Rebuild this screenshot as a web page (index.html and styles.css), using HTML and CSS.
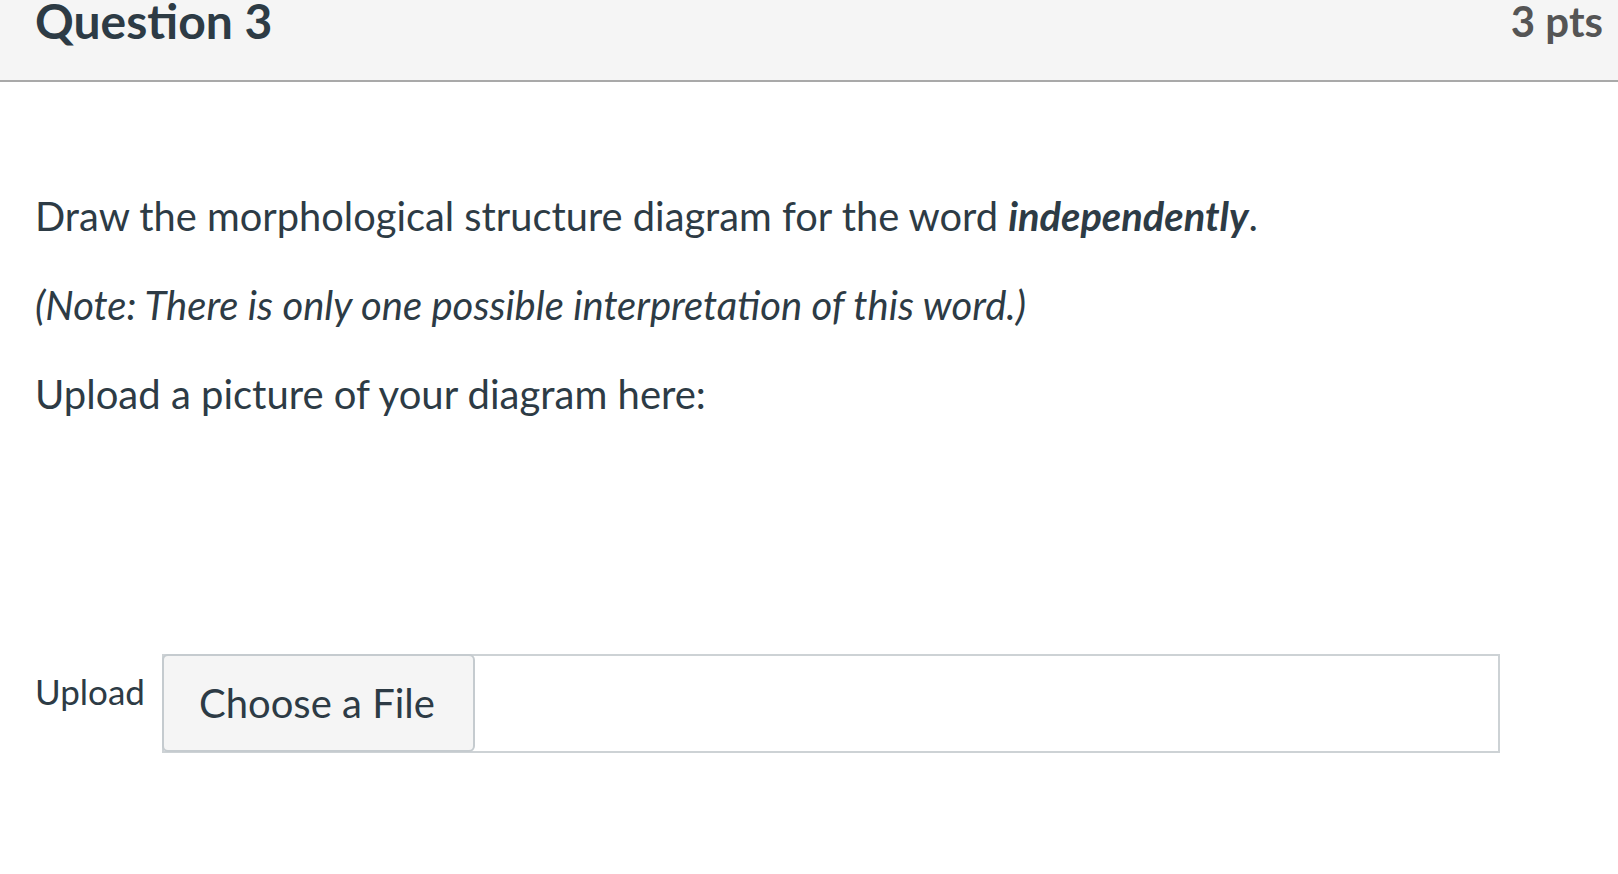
FILE: index.html
```html
<!DOCTYPE html>
<html lang="en">
<head>
<meta charset="utf-8">
<title>Question 3</title>
<link rel="stylesheet" href="styles.css">
</head>
<body>
<div class="question">
  <div class="q-header">
    <span class="q-title">Question 3</span>
    <span class="q-points">3 pts</span>
  </div>
  <div class="q-body">
    <p class="q-text q-text-lead">Draw the morphological structure diagram for the word <strong><em>independently</em></strong>.</p>
    <p class="q-text"><em>(Note: There is only one possible interpretation of this word.)</em></p>
    <p class="q-text">Upload a picture of your diagram here:</p>
    <div class="upload-row">
      <label class="upload-label">Upload</label>
      <div class="file-box">
        <span class="file-button">Choose a File</span>
      </div>
    </div>
  </div>
</div>
</body>
</html>
```
FILE: styles.css
```css
html, body {
  margin: 0;
  padding: 0;
  background: #ffffff;
}

body {
  font-family: Lato, "Noto Sans", sans-serif;
  color: #2d3b45;
}

.q-header {
  display: flex;
  justify-content: space-between;
  align-items: flex-start;
  height: 80px;
  background: #f5f5f5;
  border-bottom: 2px solid #a9a9a9;
  padding: 0 15px 0 35px;
}

.q-title {
  font-size: 48px;
  font-weight: 700;
  line-height: 42px;
}

.q-points {
  font-size: 42px;
  font-weight: 700;
  line-height: 42px;
  color: #555555;
}

.q-body {
  padding: 104px 35px 0 35px;
}

.q-text {
  margin: 0 0 29px 0;
  font-size: 40px;
  line-height: 60px;
}

.q-text-lead {
  font-size: 39.8px;
}

.q-text strong {
  font-weight: 700;
}

.upload-row {
  display: flex;
  align-items: flex-start;
  gap: 17px;
  margin-top: 230px;
}

.upload-label {
  font-size: 35px;
  line-height: 48px;
  margin-top: 13px;
}

.file-box {
  flex: 0 0 1338px;
  height: 99px;
  box-sizing: border-box;
  border: 2px solid #cdd2d5;
  display: flex;
  align-items: stretch;
}

.file-button {
  display: flex;
  align-items: center;
  box-sizing: border-box;
  width: 313px;
  margin: -2px 0 -1px -2px;
  padding: 0 0 0 35px;
  background: #f5f5f5;
  border: 2px solid #c5cbcf;
  border-radius: 6px;
  font-size: 40px;
}
```
